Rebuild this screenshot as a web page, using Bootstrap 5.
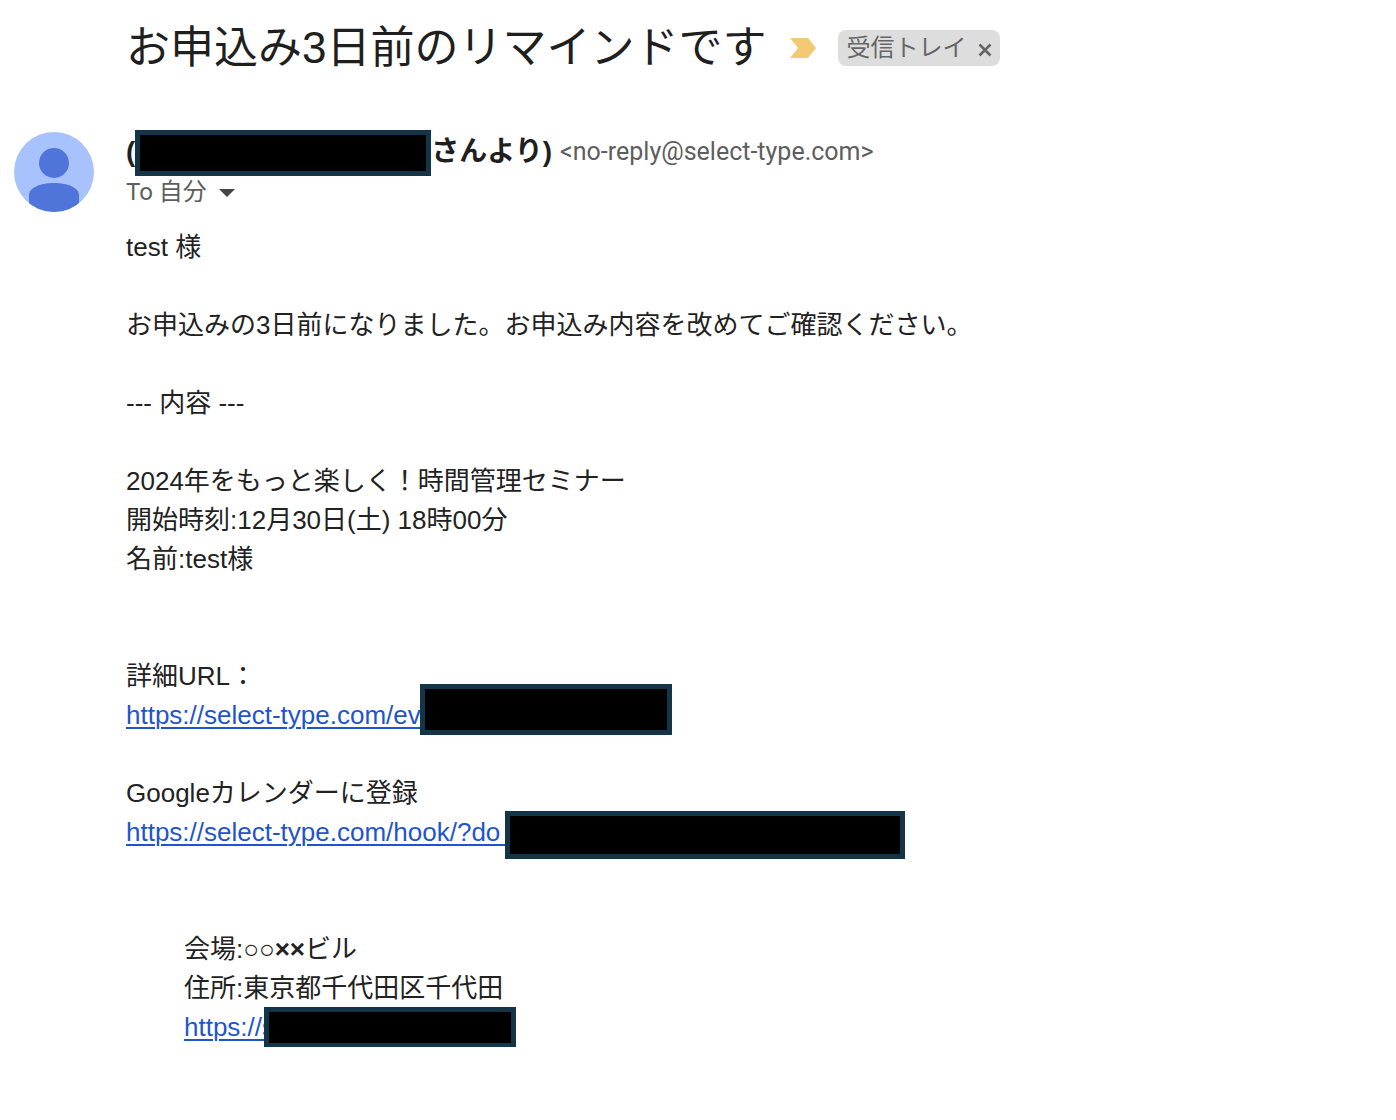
<!DOCTYPE html>
<html lang="ja">
<head>
<meta charset="utf-8">
<meta name="viewport" content="width=device-width, initial-scale=1">
<title>お申込み3日前のリマインドです</title>
<link href="https://cdn.jsdelivr.net/npm/bootstrap@5.3.0/dist/css/bootstrap.min.css" rel="stylesheet">
<style>
  body { font-family: "Liberation Sans", "Noto Sans CJK JP", sans-serif; font-size: 26px; line-height: 39px; color: #222; }
  .mail-side { width: 126px; padding: 2px 0 0 14px; }
  .mail-title { font-size: 44px; line-height: 60px; font-weight: 400; color: #1f1f1f; }
  .mail-head { padding-top: 18px; padding-bottom: 52px; }
  .inbox-chip { height: 36px; margin-left: 22px; padding: 0 8px; gap: 12px; border-radius: 8px; background: #ddd; color: #666; font-size: 24px; line-height: 36px; }
  .chip-close { padding-top: 4px; }
  .sender { font-size: 28px; line-height: 42px; color: #1f1f1f; }
  .sender strong { line-height: 40px; padding-bottom: 2px; }
  .meta { font-family: Roboto, "Noto Sans CJK JP", sans-serif; font-size: 24px; color: #5e5e5e; }
  .address { font-size: 25px; padding-bottom: 2px; }
  .to-line { line-height: 32px; height: 32px; margin-bottom: 4px; }
  .mail-body a { color: #1f55cc; text-decoration-thickness: 2px; text-underline-offset: 3px; }
  .mail-line { height: 39px; }
  .redacted { background: #000; border: 5px solid #143547; position: relative; }
  .redacted-name { width: 296px; height: 46px; }
  .redacted-detail { width: 252px; height: 51px; margin: -12px 0 0 -1px; }
  .redacted-hook { width: 400px; height: 48px; margin: -2px 0 0 -10px; }
  .redacted-venue { width: 252px; height: 41px; margin: -1px 0 0 -11px; }
  .venue { padding-left: 58px; }
</style>
</head>
<body class="bg-white">
<main>
  <header class="mail-head d-flex align-items-center">
    <div class="mail-side flex-shrink-0"></div>
    <div class="d-flex align-items-center">
      <h1 class="mail-title mb-0">お申込み3日前のリマインドです</h1>
      <svg class="ms-4 flex-shrink-0" width="26" height="20" viewBox="0 0 26 20" role="img" aria-label="重要"><path d="M0 0H18L26 10L18 20H0L8 10Z" fill="#f1ca73"/></svg>
      <span class="inbox-chip d-inline-flex align-items-center flex-shrink-0">受信トレイ
        <button type="button" class="chip-close btn px-0 pb-0 border-0 d-flex" aria-label="ラベルを削除"><svg width="14" height="14" viewBox="0 0 14 14"><path d="M1.5 1.5L12.5 12.5M12.5 1.5L1.5 12.5" stroke="#666" stroke-width="2.6"/></svg></button>
      </span>
    </div>
  </header>
  <article class="d-flex">
    <div class="mail-side flex-shrink-0">
      <svg class="d-block" width="80" height="80" viewBox="0 0 80 80" role="img" aria-label="送信者"><defs><clipPath id="disc"><circle cx="40" cy="40" r="40"/></clipPath></defs><g clip-path="url(#disc)"><path d="M0 0H80V80H0Z" fill="#a7c2fc"/><circle cx="40" cy="31" r="15" fill="#4f74da"/><path d="M15 80V63C15 56 26 51 40 51S65 56 65 63V80Z" fill="#4f74da"/></g></svg>
    </div>
    <div class="flex-grow-1">
      <div class="sender d-flex align-items-center">
        <strong>(</strong><span class="redacted redacted-name flex-shrink-0"></span><strong>さんより)</strong>
        <span class="meta address ms-2">&lt;no-reply@select-type.com&gt;</span>
      </div>
      <div class="meta to-line d-flex align-items-center">To 自分
        <button type="button" class="btn p-0 border-0 d-flex ms-2" aria-label="詳細を表示"><svg width="24" height="24" viewBox="0 0 24 24"><path d="M4 9H20L12 17Z" fill="#444"/></svg></button>
      </div>
      <div class="mail-body pt-3">
        <div>test 様</div>
        <br>
        <div>お申込みの3日前になりました。お申込み内容を改めてご確認ください。</div>
        <br>
        <div>--- 内容 ---</div>
        <br>
        <div>2024年をもっと楽しく！時間管理セミナー</div>
        <div>開始時刻:12月30日(土) 18時00分</div>
        <div>名前:test様</div>
        <br><br>
        <div>詳細URL：</div>
        <div class="mail-line d-flex align-items-start"><a href="#">https://select-type.com/ev</a><span class="redacted redacted-detail"></span></div>
        <br>
        <div>Googleカレンダーに登録</div>
        <div class="mail-line d-flex align-items-start"><a href="#">https://select-type.com/hook/?do_</a><span class="redacted redacted-hook"></span></div>
        <br><br>
        <div class="venue">
          <div>会場:○○<b>××</b>ビル</div>
          <div>住所:東京都千代田区千代田</div>
          <div class="mail-line d-flex align-items-start"><a href="#">https://s</a><span class="redacted redacted-venue"></span></div>
        </div>
      </div>
    </div>
  </article>
</main>
<script src="https://cdn.jsdelivr.net/npm/bootstrap@5.3.0/dist/js/bootstrap.bundle.min.js"></script>
</body>
</html>
